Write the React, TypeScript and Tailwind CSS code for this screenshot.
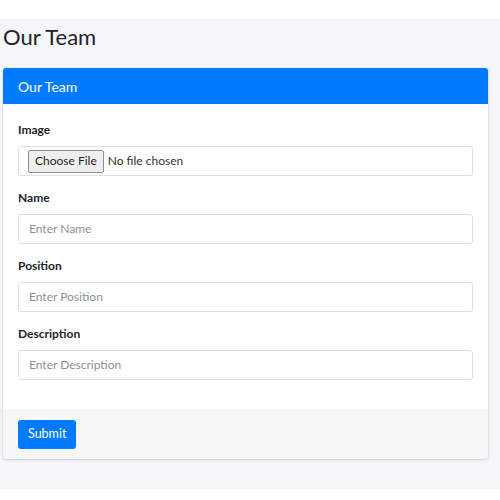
export default function App() {
  const fields = [
    { label: 'Name', placeholder: 'Enter Name' },
    { label: 'Position', placeholder: 'Enter Position' },
    { label: 'Description', placeholder: 'Enter Description' },
  ];

  return (
    <div className="w-[500px] h-[500px] bg-white font-['Lato',sans-serif] text-[#212529]">
      <div className="mt-[19px] h-[470px] bg-[#f4f6f9] pl-[3px] pr-[12px]">
        <h1 className="h-[49px] pt-[3px] text-[22px] leading-[30px] font-normal">Our Team</h1>

        <div className="bg-white rounded-[3px] shadow-[0_0_1px_rgba(0,0,0,0.2),0_1px_3px_rgba(0,0,0,0.15)] overflow-hidden">
          <div className="h-[36px] bg-[#007bff] px-[15px] flex items-center text-white text-[14px]">
            Our Team
          </div>

          <div className="px-[15px] pt-[17px] pb-[16px]">
            <div className="mb-[13px]">
              <div className="h-[18px] leading-[18px] text-[12px] font-bold mb-[7px]">Image</div>
              <div className="h-[30px] border border-[#dcdfe3] rounded-[3px] flex items-center pl-[9px] text-[12px]">
                <span className="h-[23px] px-[6px] flex items-center bg-[#efefef] border border-[#8f8f8f] rounded-[2px] text-[#1f1f1f]">
                  Choose File
                </span>
                <span className="ml-[4px] text-[#333]">No file chosen</span>
              </div>
            </div>

            {fields.map((f) => (
              <div key={f.label} className="mb-[13px]">
                <div className="h-[18px] leading-[18px] text-[12px] font-bold mb-[7px]">{f.label}</div>
                <div className="h-[30px] border border-[#dcdfe3] rounded-[3px] flex items-center px-[10px] text-[12px] text-[#8a9096]">
                  {f.placeholder}
                </div>
              </div>
            ))}
          </div>

          <div className="h-[50px] bg-[#f7f7f7] px-[15px] flex items-center">
            <button className="h-[29px] px-[10px] bg-[#007bff] text-white text-[12.5px] rounded-[3px]">
              Submit
            </button>
          </div>
        </div>
      </div>
    </div>
  );
}
